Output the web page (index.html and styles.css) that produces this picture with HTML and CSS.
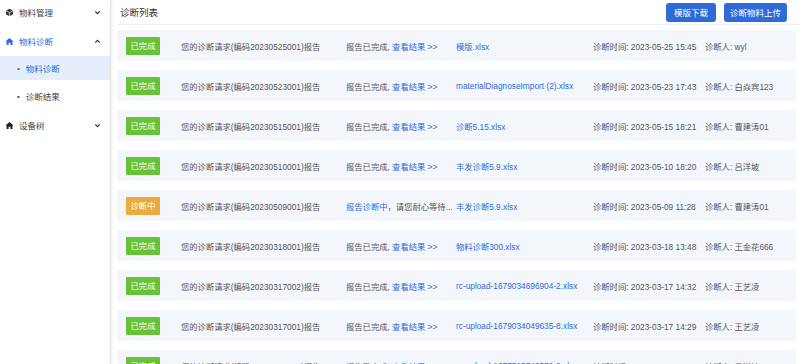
FILE: index.html
```html
<!DOCTYPE html>
<html lang="zh-CN">
<head>
    <meta charset="UTF-8">
    <meta name="viewport" content="width=device-width, initial-scale=1.0">
    <title>诊断列表</title>
    <link rel="stylesheet" href="styles.css">
</head>
<body>
    <div class="layout">
        <aside class="sidebar">
            <div class="menu-item first">
                <svg class="menu-icon" viewBox="0 0 10 10"><path d="M5 0.8 L9 3 L9 7 L5 9.2 L1 7 L1 3 Z" fill="#333"/><path d="M1 3 L5 5.2 L9 3 M5 5.2 L5 9.2" stroke="#fff" stroke-width="0.8" fill="none"/></svg>
                <span class="menu-label">物料管理</span>
                <svg class="chevron" viewBox="0 0 10 10"><path d="M2.5 3.8 L5 6.3 L7.5 3.8" stroke="#333" stroke-width="1.4" fill="none"/></svg>
            </div>
            <div class="menu-item group active">
                <svg class="menu-icon" viewBox="0 0 10 10"><path d="M5 1 L9.5 5 L8.3 5 L8.3 9 L6 9 L6 6.5 L4 6.5 L4 9 L1.7 9 L1.7 5 L0.5 5 Z" fill="#2f6bd8"/></svg>
                <span class="menu-label">物料诊断</span>
                <svg class="chevron" viewBox="0 0 10 10"><path d="M2.5 6.2 L5 3.7 L7.5 6.2" stroke="#333" stroke-width="1.4" fill="none"/></svg>
            </div>
            <div class="sub-item selected"><span class="dot">•</span>物料诊断</div>
            <div class="sub-item"><span class="dot">•</span>诊断结果</div>
            <div class="menu-item last">
                <svg class="menu-icon" viewBox="0 0 10 10"><path d="M5 1 L9.5 5 L8.3 5 L8.3 9 L6 9 L6 6.5 L4 6.5 L4 9 L1.7 9 L1.7 5 L0.5 5 Z" fill="#222"/></svg>
                <span class="menu-label">设备树</span>
                <svg class="chevron" viewBox="0 0 10 10"><path d="M2.5 3.8 L5 6.3 L7.5 3.8" stroke="#333" stroke-width="1.4" fill="none"/></svg>
            </div>
        </aside>

        <main class="main">
            <div class="page-header">
                <h1>诊断列表</h1>
                <div class="actions">
                    <button class="btn">模版下载</button>
                    <button class="btn">诊断物料上传</button>
                </div>
            </div>

            <div class="list" id="list"></div>
        </main>
    </div>

    <script>
        const records = [
            { done: true, code: "20230525001", file: "模版.xlsx", time: "2023-05-25 15:45", user: "wyl" },
            { done: true, code: "20230523001", file: "materialDiagnoseImport (2).xlsx", time: "2023-05-23 17:43", user: "白焱宾123" },
            { done: true, code: "20230515001", file: "诊断5.15.xlsx", time: "2023-05-15 18:21", user: "曹建涛01" },
            { done: true, code: "20230510001", file: "丰发诊断5.9.xlsx", time: "2023-05-10 18:20", user: "吕洋坡" },
            { done: false, code: "20230509001", file: "丰发诊断5.9.xlsx", time: "2023-05-09 11:28", user: "曹建涛01" },
            { done: true, code: "20230318001", file: "物料诊断300.xlsx", time: "2023-03-18 13:48", user: "王金花666" },
            { done: true, code: "20230317002", file: "rc-upload-1679034696904-2.xlsx", time: "2023-03-17 14:32", user: "王艺凌" },
            { done: true, code: "20230317001", file: "rc-upload-1679034049635-8.xlsx", time: "2023-03-17 14:29", user: "王艺凌" },
            { done: true, code: "20230302001", file: "rc-upload-1677515749579-2.xlsx", time: "2023-03-02 09:04", user: "吕洋坡" }
        ];

        const list = document.getElementById("list");

        records.forEach(r => {
            const row = document.createElement("div");
            row.className = "card";
            row.innerHTML = `
                <div><span class="badge ${r.done ? 'badge-done' : 'badge-doing'}">${r.done ? '已完成' : '诊断中'}</span></div>
                <div>您的诊断请求(编码${r.code})报告</div>
                <div>${r.done
                    ? '报告已完成, <a class="link">查看结果 &gt;&gt;</a>'
                    : '<a class="link">报告诊断中</a>，请您耐心等待...'}</div>
                <div><a class="link">${r.file}</a></div>
                <div>诊断时间: ${r.time}</div>
                <div>诊断人: ${r.user}</div>
            `;
            list.appendChild(row);
        });
    </script>
</body>
</html>
```

FILE: styles.css
```css
body {
    margin: 0;
    padding: 0;
    font-family: "Liberation Sans", "Noto Sans CJK SC", sans-serif;
    font-size: 8.3px;
    color: #555;
    background: #fff;
    overflow: hidden;
}
.layout {
    display: flex;
    height: 364px;
}
.sidebar {
    width: 110px;
    flex-shrink: 0;
    background: #fff;
    border-right: 1px solid #e4e6ea;
    box-shadow: 1px 0 3px rgba(0, 0, 0, 0.08);
    font-size: 8.5px;
    color: #444;
}
.menu-item {
    display: flex;
    align-items: center;
    padding: 0 8px 0 5px;
}
.menu-item.first {
    height: 24px;
}
.menu-item.group {
    height: 32px;
    padding-top: 2px;
    box-sizing: border-box;
}
.menu-item.last {
    height: 26px;
}
.menu-item.active {
    color: #2f6bd8;
}
.menu-icon {
    width: 9px;
    height: 9px;
    margin-right: 5px;
}
.menu-label {
    flex: 1;
}
.chevron {
    width: 9px;
    height: 9px;
}
.sub-item {
    height: 24px;
    display: flex;
    align-items: center;
    padding-left: 17px;
    color: #444;
}
.sub-item + .sub-item {
    height: 32px;
}
.sub-item.selected {
    background: #e6eefb;
    color: #2f6bd8;
}
.dot {
    margin-right: 6px;
    font-size: 8px;
}
.main {
    flex: 1;
    padding-left: 6px;
    min-width: 0;
}
.page-header {
    height: 25px;
    display: flex;
    align-items: center;
    justify-content: space-between;
    border-bottom: 1px solid #eceef2;
    padding: 0 13px 0 3px;
    box-sizing: border-box;
}
h1 {
    margin: 0;
    font-size: 9.5px;
    font-weight: normal;
    color: #333;
}
.actions {
    display: flex;
    gap: 8px;
}
.btn {
    height: 19px;
    padding: 0 6px;
    border: none;
    border-radius: 3px;
    background: #2f6bd8;
    color: #fff;
    font-family: inherit;
    font-size: 8.5px;
    cursor: pointer;
}
.btn:first-child {
    padding: 0 8px;
}
.list {
    padding: 5px 4px 0 0;
    display: flex;
    flex-direction: column;
    gap: 9px;
}
.card {
    height: 31px;
    flex-shrink: 0;
    display: grid;
    grid-template-columns: 55px 165px 110px 137px 112px auto;
    align-items: center;
    padding-left: 9px;
    background: #f3f7fc;
    border-radius: 2px;
    white-space: nowrap;
}
.badge {
    display: inline-block;
    width: 34px;
    height: 18px;
    line-height: 18px;
    text-align: center;
    color: #fff;
    border-radius: 1px;
}
.badge-done {
    background: #67c23a;
}
.badge-doing {
    background: #e9ac3e;
}
.link {
    color: #2f6bd8;
    cursor: pointer;
}
```
